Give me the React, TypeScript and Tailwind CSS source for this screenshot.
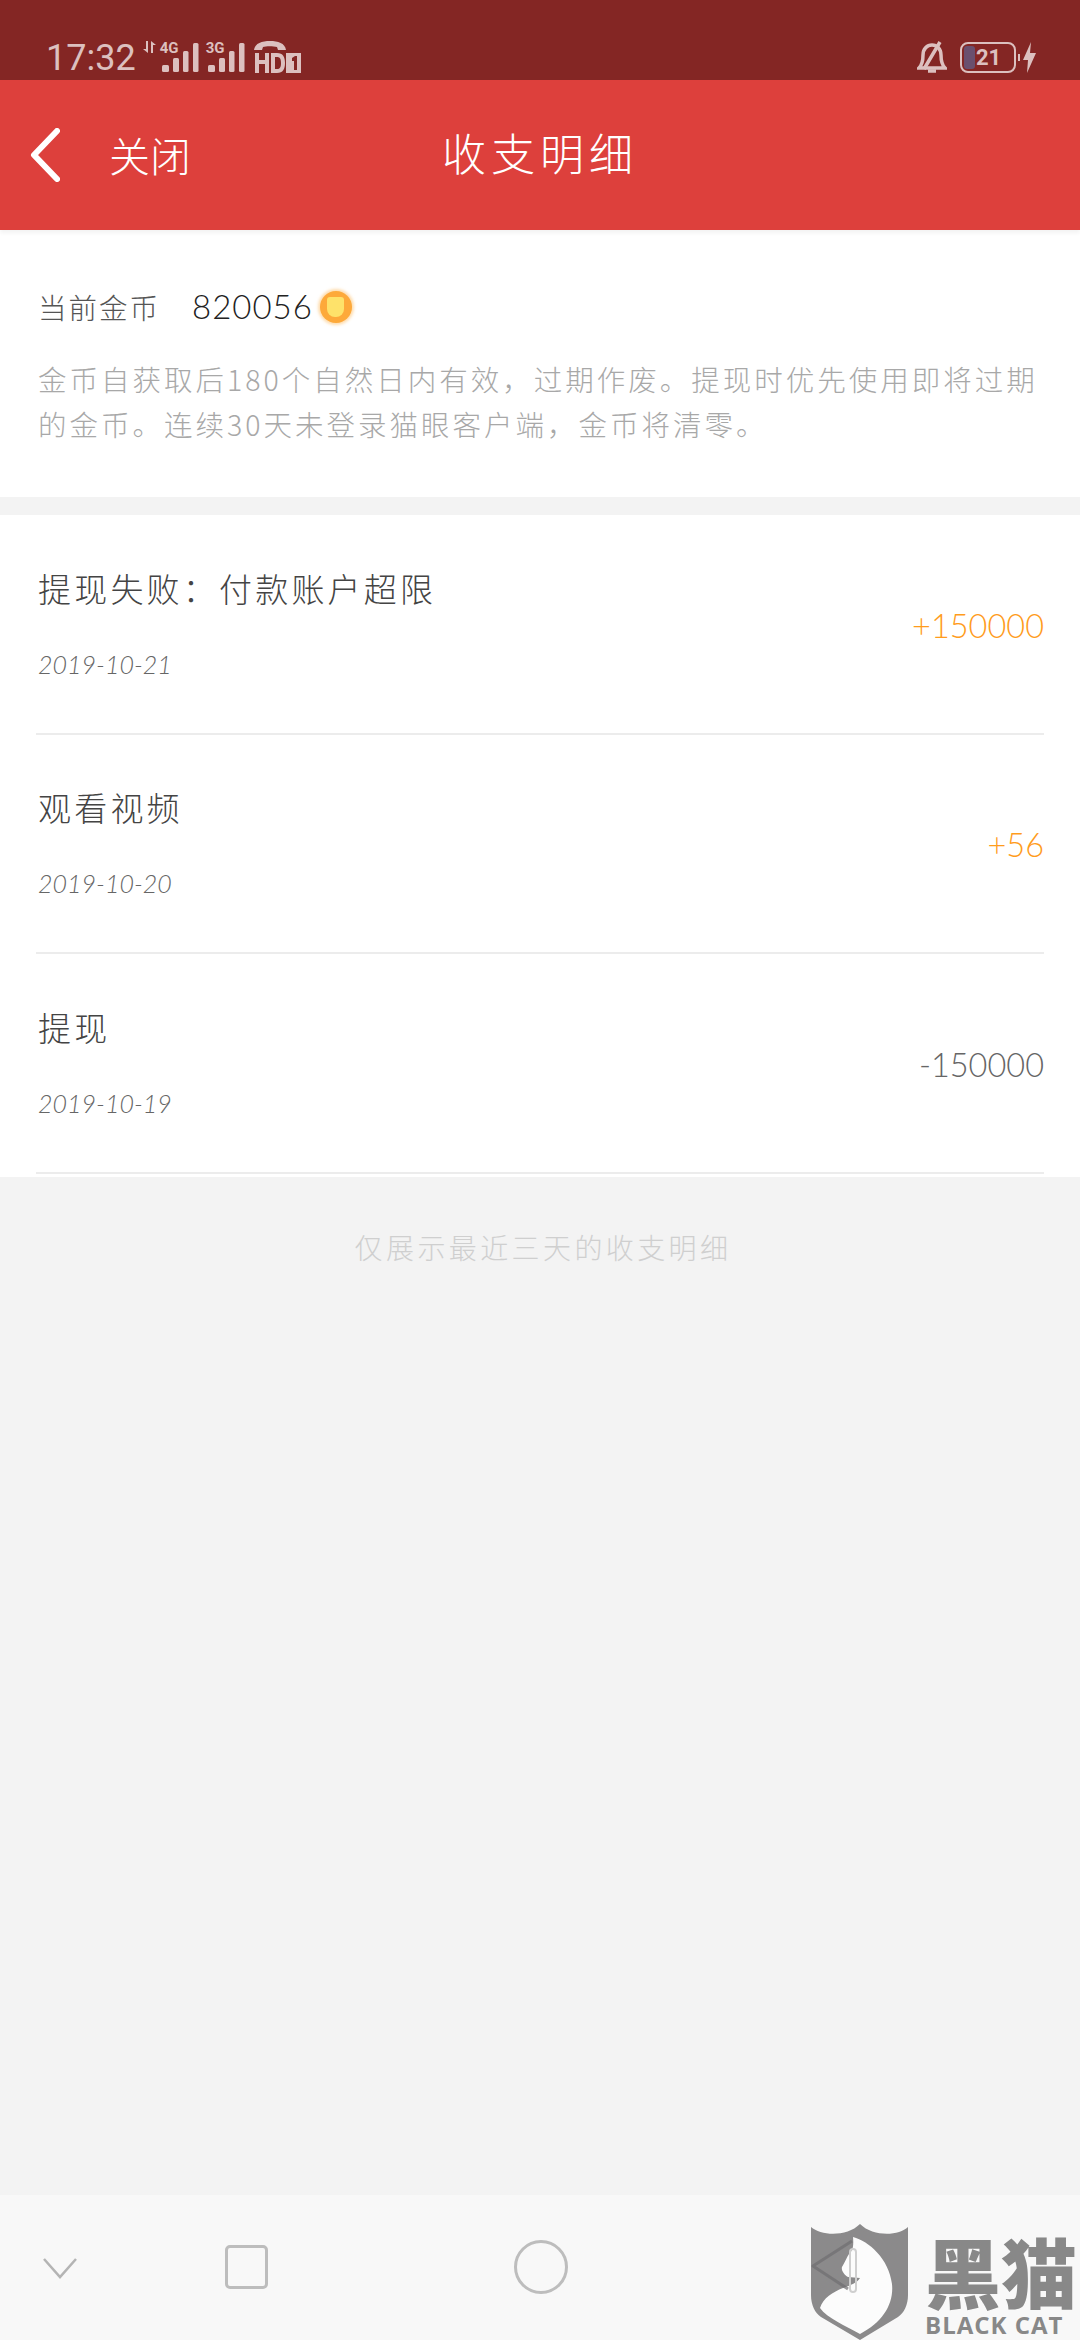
const cjk = "font-['Noto_Sans_CJK_SC',sans-serif] font-light"
const num = "font-['Lato','Noto_Sans_CJK_SC',sans-serif] font-light"

const rows = [
  { title: '提现失败\uFF1A付款账户超限', date: '2019-10-21', amount: '+150000', up: true },
  { title: '观看视频', date: '2019-10-20', amount: '+56', up: true },
  { title: '提现', date: '2019-10-19', amount: '-150000', up: false },
]

function Signal({ label }: { label: string }) {
  return (
    <div className="relative w-[37px] h-[31px]">
      <svg width="37" height="31" viewBox="0 0 37 31" className="absolute left-0 top-0" fill="currentColor">
        <rect x="0" y="23" width="7" height="7" rx="1.5" />
        <rect x="11" y="16" width="6" height="14" rx="1.5" />
        <rect x="21" y="9" width="5.5" height="21" rx="1.5" />
        <rect x="31" y="1" width="5.5" height="29" rx="1.5" />
      </svg>
      <span className="absolute left-[-2px] top-[-1px] text-[15px] leading-[15px] font-bold">{label}</span>
    </div>
  )
}

function StatusBar() {
  return (
    <div className="h-[80px] bg-[#842624] text-[#dcc0bf] flex items-end justify-between pb-[7px] pl-[46px] pr-[44px] font-['Roboto',sans-serif]">
      <div className="flex items-end">
        <span className="text-[36px] leading-[36px] mb-[-3px]">17:32</span>
        <svg width="14" height="12" viewBox="0 0 14 12" fill="currentColor" className="ml-[7px] mb-[20px]">
          <path d="M5 0v12L0 8h3V0zM8 0l5 4h-3v8H8z" />
        </svg>
        <div className="ml-[5px]">
          <Signal label="4G" />
        </div>
        <div className="ml-[9px]">
          <Signal label="3G" />
        </div>
        <svg width="48" height="32" viewBox="0 0 48 32" fill="currentColor" className="ml-[9px]">
          <path d="M0 9C1 2 8 0 16 0s15 2 16 9h-8l-1-3c-4-1-11-1-14 0L8 9z" />
          <path d="M1 12h4v7h6v-7h4v20h-4v-9H5v9H1zM17 12h6c6 0 8 4 8 10s-2 10-8 10h-6zm4 4v12h2c3 0 4-2 4-6s-1-6-4-6z" />
          <path fillRule="evenodd" d="M32 12h15v20H32zm6 5v3h2v9h3V15h-2z" />
        </svg>
      </div>
      <div className="flex items-end">
        <svg width="30" height="33" viewBox="0 0 30 33" fill="none" stroke="currentColor" strokeWidth="3.5">
          <path d="M2 28c3-3 4-7 4-13 0-6 4-10 9-10s9 4 9 10c0 6 1 10 4 13z" />
          <path d="M11 31h8M7 29 23 2" />
        </svg>
        <div className="ml-[13px] w-[56px] h-[31px] border-[2px] border-current rounded-[8px] relative flex items-center pl-[14px]">
          <div className="absolute left-[2px] top-[2px] bottom-[2px] w-[11px] rounded-[3px] bg-[#6a4f6e]" />
          <span className="text-[22px] leading-[22px] font-bold relative">21</span>
        </div>
        <div className="w-[2px] h-[7px] bg-current ml-[2px] mb-[12px]" />
        <svg width="13" height="31" viewBox="0 0 13 31" fill="currentColor" className="ml-[3px]">
          <path d="M8 0 0 18h5l-1 13 9-20H7z" />
        </svg>
      </div>
    </div>
  )
}

function NavBar() {
  return (
    <div className="h-[150px] bg-[#dd403c] text-white flex items-center relative shadow-[0_3px_4px_rgba(0,0,0,0.05)]">
      <svg width="30" height="54" viewBox="0 0 30 54" fill="none" stroke="currentColor" strokeWidth="6" strokeLinecap="round" strokeLinejoin="round" className="ml-[30px]">
        <path d="M27 3 4 27l23 24" />
      </svg>
      <span className={`${cjk} ml-[49px] mt-[-3px] text-[41px] leading-[48px]`}>关闭</span>
      <span className={`${cjk} absolute left-0 right-0 top-[44px] text-center text-[44px] tracking-[5px] leading-[56px]`}>收支明细</span>
    </div>
  )
}

function Coin() {
  return (
    <div className="ml-[7px] w-[32px] h-[32px] rounded-full bg-[#fda93a] flex items-center justify-center shadow-[0_0_3px_2px_rgba(253,199,122,0.6)]">
      <div className="w-[17px] h-[20px] rounded-b-[8px] rounded-t-[3px] bg-[#fee26a]" />
    </div>
  )
}

function Row({ title, date, amount, up }: { title: string; date: string; amount: string; up: boolean }) {
  return (
    <div className="h-[219.5px] border-b-2 border-[#ececec] flex items-center justify-between">
      <div className="pl-[2px]">
        <div className={`${cjk} mt-[-3px] text-[33px] leading-[44px] tracking-[3.2px] text-[#444]`}>{title}</div>
        <div className={`${num} italic mt-[39px] text-[25px] leading-[30px] text-[#666]`}>{date}</div>
      </div>
      <div className={`${num} text-[32.5px] leading-[40px] mt-[4px] ${up ? 'text-[#ff9c1c]' : 'text-[#666]'}`}>{amount}</div>
    </div>
  )
}

function Watermark() {
  return (
    <div className="absolute right-0 bottom-0 flex items-end h-[116px] text-[#888]">
      <svg width="98" height="116" viewBox="0 0 98 116" className="mr-[16px]">
        <path d="M0 3c10 9 36 10 49-3 13 13 39 12 48 3v68c0 10-4 18-10 22L49 116 10 93C4 89 0 81 0 71z" fill="#8b8a8b" />
        <path d="M42 13C58 17 78 35 81 60 83 80 72 98 49 110 35 102 16 94 9 84c3-10 13-16 23-20 8-3 14-5 17-10l-12-1c-4-2-7-7-6-10 3-5 5-10 7-13 3-3 5-6 4-17z" fill="#fcfcfc" />
        <path d="M41 17 2 42l35 23" fill="none" stroke="#6f6e70" strokeOpacity="0.7" strokeWidth="3" strokeLinejoin="round" />
        <rect x="39" y="25" width="6" height="43" rx="3" fill="none" stroke="#cfcfcf" strokeWidth="2" />
      </svg>
      <div className="flex flex-col gap-[9px] w-[155px] pb-[4px]">
        <span className="font-['Noto_Sans_CJK_SC',sans-serif] font-black text-[76px] leading-[70px] whitespace-nowrap">黑猫</span>
        <span className="font-['Open_Sans',sans-serif] font-bold text-[24px] leading-[22px] tracking-[1px] whitespace-nowrap">BLACK CAT</span>
      </div>
    </div>
  )
}

export default function App() {
  return (
    <div className="w-[1080px] h-[2340px] bg-[#f3f3f3] flex flex-col relative overflow-hidden">
      <StatusBar />
      <NavBar />

      <div className="h-[267px] bg-white px-[38px] pt-[57px]">
        <div className="flex items-center h-[40px]">
          <span className={`${cjk} text-[28.5px] tracking-[2px] text-[#555]`}>当前金币</span>
          <span className={`${num} ml-[32px] text-[33px] tracking-[1px] text-[#222]`}>820056</span>
          <Coin />
        </div>
        <p className={`${cjk} mt-[29px] text-[28.5px] leading-[45px] tracking-[3px] text-[#a8a8a8] whitespace-pre-line`}>
          {'金币自获取后180个自然日内有效\uFF0C过期作废。提现时优先使用即将过期\n的金币。连续30天未登录猫眼客户端\uFF0C金币将清零。'}
        </p>
      </div>

      <div className="mt-[18px] bg-white h-[662px] px-[36px]">
        {rows.map(r => (
          <Row key={r.date} {...r} />
        ))}
      </div>

      <div className={`${cjk} mt-[50px] pl-[6px] text-center text-[28px] leading-[40px] tracking-[3.4px] text-[#cfcfcf]`}>
        仅展示最近三天的收支明细
      </div>

      <div className="mt-auto h-[145px] bg-[#f8f8f8] flex items-center pb-[1px]">
        <svg width="36" height="22" viewBox="0 0 36 22" fill="none" stroke="#b4b4b4" strokeWidth="2.5" className="ml-[42px] mb-[-2px]">
          <path d="M2 2l16 18L34 2" />
        </svg>
        <div className="ml-[147px] w-[43px] h-[44px] border-[3px] border-[#bdbdbd] rounded-[5px]" />
        <div className="ml-[246px] w-[54px] h-[54px] border-[3px] border-[#bdbdbd] rounded-full" />
      </div>

      <Watermark />
    </div>
  )
}
